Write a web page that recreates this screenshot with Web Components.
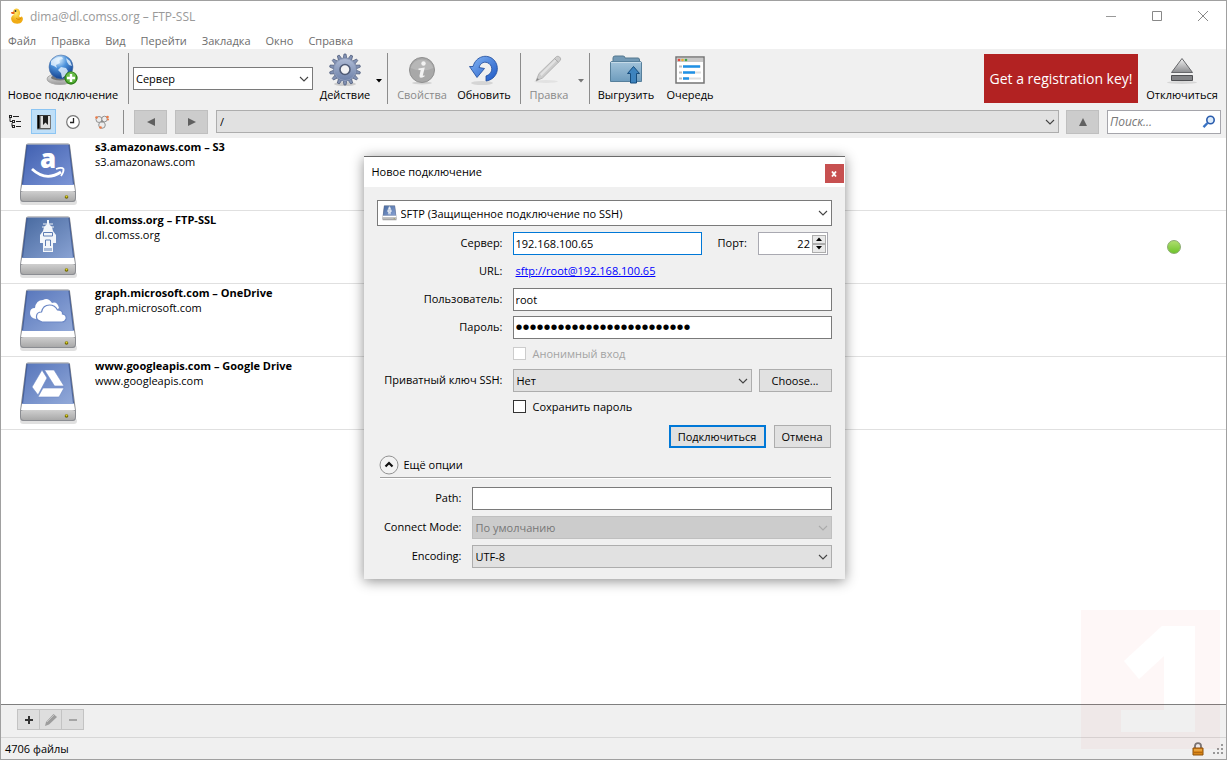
<!DOCTYPE html>
<html lang="ru">
<head>
<meta charset="utf-8">
<meta name="viewport" content="width=device-width, initial-scale=1">
<title>dima@dl.comss.org – FTP-SSL</title>
<style>
  html, body { margin: 0; height: 100%; }
  body { font: 11px/15px "Open Sans", "Noto Sans", sans-serif; color: #000; background: #fff; overflow: hidden; }
</style>
</head>
<body>
<ftp-window></ftp-window>

<script>
const define = (name, html, init) => customElements.define(name, class extends HTMLElement {
  constructor() {
    super();
    const t = document.createElement('template');
    t.innerHTML = html;
    this.attachShadow({ mode: 'open' }).append(t.content.cloneNode(true));
  }
  connectedCallback() { if (init) init.call(this, this.shadowRoot); }
});

/* ---------- icons ---------- */
const ICONS = {
  duck: [16, 16, `<defs><radialGradient id="g" cx=".4" cy=".3"><stop offset="0" stop-color="#ffec6a"/><stop offset="1" stop-color="#f0ab14"/></radialGradient></defs>
    <path d="M4.500 7C2 8 1.500 11 3 13.500C5 16.500 11.500 16.500 13 13.500C14.500 11.500 14 9 12.500 8.500C11.500 9.500 10.500 9.300 10 8C11.500 6.500 11.500 3 9.500 1.200C7.500-.2 4.600.8 4.200 3.200C4 4.800 5 6 4.500 7Z" fill="url(#g)"/>
    <path d="M5.500 3.500L2 4.200C1.700 5.700 3.500 6.300 5.500 5.800Z" fill="#e8621c"/><circle cx="6.500" cy="3" r=".9" fill="#333"/><path d="M7 10C9 12 11 11.500 12 10" fill="none" stroke="#cf8208"/>`],
  globe: [34, 34, `<defs><radialGradient id="g" cx=".4" cy=".2" r=".85"><stop offset="0" stop-color="#e2f4ff"/><stop offset=".4" stop-color="#4d93dc"/><stop offset="1" stop-color="#0c3785"/></radialGradient>
    <linearGradient id="s" x1="0" y1="0" x2="0" y2="1"><stop offset="0" stop-color="#eee"/><stop offset="1" stop-color="#999"/></linearGradient></defs>
    <ellipse cx="14" cy="26" rx="13" ry="5.500" fill="url(#s)" stroke="#a8a8a8"/><ellipse cx="14" cy="24.500" rx="9" ry="3" fill="#777"/>
    <circle cx="15" cy="14" r="12" fill="url(#g)" stroke="#5275a8" stroke-width=".6"/>
    <path d="M5 8C8 5 12 3.500 16 4L17 6L13 7L14 10L10 12L11 15L8 13L5 12ZM15 14L20 15L22 18L19 23L16 25L15 20L12 17ZM20 5L24 8L26 13L23 12L21 9Z" fill="#e8f5ff" opacity=".8"/>
    <circle cx="25" cy="25" r="6.500" fill="#4ca82d"/><circle cx="25" cy="25" r="6" fill="none" stroke="#2a7418"/><circle cx="25" cy="24" r="5" fill="#7cc95c" opacity=".6"/>
    <path d="M25 21V29M21 25H29" stroke="#fff" stroke-width="2.400"/>`],
  gear: [34, 34, `<defs><linearGradient id="g" x1="0" y1="0" x2="0" y2="1"><stop offset="0" stop-color="#b0bcd6"/><stop offset="1" stop-color="#6c80a8"/></linearGradient></defs>
    <ellipse cx="17" cy="31" rx="11" ry="2" fill="#ccc"/><g id="teeth" fill="#8292b4" stroke="#4f5c7b" stroke-width=".7"></g>
    <circle cx="17" cy="16.500" r="11.500" fill="url(#g)" stroke="#5b6988" stroke-width=".6"/><circle cx="17" cy="16.500" r="11" fill="none" stroke="#8f9dbd"/><circle cx="17" cy="16.500" r="5" fill="#f2f2f3" stroke="#4f5b76" stroke-width="1.600"/>`],
  info: [30, 30, `<ellipse cx="15" cy="28" rx="10" ry="1.500" fill="#d2d2d2"/><circle cx="15" cy="15" r="12.500" fill="#a8a8a8" stroke="#8f8f8f"/><path d="M3.500 13A12 12 0 0 1 26.500 13Q15 18 3.500 13Z" fill="#bdbdbd" opacity=".7"/><circle cx="16.500" cy="8.500" r="2.200" fill="#f2f2f2"/><path d="M11.500 13.500L17.800 12.500L15.800 20.500Q16 21 17.500 20.200V21.500Q12 24.500 12.500 20.500L13.700 15H11.500Z" fill="#f2f2f2"/>`],
  refresh: [32, 32, `<defs><linearGradient id="g" x1="0" y1="0" x2="1" y2="1"><stop offset="0" stop-color="#86b7f5"/><stop offset="1" stop-color="#1d57c4"/></linearGradient></defs>
    <ellipse cx="14" cy="29" rx="11" ry="2" fill="#d5d5d5"/><path d="M5 12.500C8 2 19-.5 25.500 5.500C33 13 29 25.500 18 27V22C24.500 20 25.500 13 21 9.500C17 6.800 12.500 8.500 11 13.500L16.500 14.500L9 23.500L1.500 12.500Z" fill="url(#g)" stroke="#1b4799" stroke-width=".8"/>`],
  pencil: [32, 32, `<ellipse cx="13" cy="27.500" rx="12" ry="1.500" fill="#e2e2e2"/><path d="M3 27L6 19.500L23.500 2.500Q25 1.500 26.800 3.200Q28.500 5 27.200 6.500L9.500 24Z" fill="#cdcdcd" stroke="#aaa" stroke-width=".8"/><path d="M7 20L22.500 5L24 6.300L8.500 22Z" fill="#e2e2e2"/><path d="M3 27L4.500 24L6 25.500Z" fill="#888"/><path d="M21.500 4.500L25.500 8.300" stroke="#aaa"/>`],
  folder: [34, 30, `<defs><linearGradient id="g" x1="0" y1="0" x2="0" y2="1"><stop offset="0" stop-color="#a2c3da"/><stop offset="1" stop-color="#6e9cbd"/></linearGradient></defs>
    <path d="M4 8V3Q4 1 6 1H14Q16 1 16 3H29Q30.500 3 30.500 5V9Z" fill="#7299b5" stroke="#54788f"/><path d="M1.500 8Q1.500 6.500 3 6.500H31Q32.500 6.500 32.500 8V26.500H1.500Z" fill="url(#g)" stroke="#57809c"/><path d="M2 7.500H32" stroke="#c4dae8"/>
    <path d="M24.500 11.500L30.500 18.500H27.500V28H21.500V18.500H18.500Z" fill="#3d83be" stroke="#174d7d"/>`],
  queue: [30, 28, `<path d="M1 1H29V27H1Z" fill="#fff" stroke="#747474" stroke-width="1.500"/><path d="M2 2H28V6H2Z" fill="#c8c8c8"/><circle cx="4" cy="4" r="1.300" fill="#e5483c"/><circle cx="7.500" cy="4" r="1.300" fill="#ecad32"/><circle cx="11" cy="4" r="1.300" fill="#3fa545"/>
    <path d="M4 10.500H7M4 16.500H7M4 22.500H7" stroke="#bbb" stroke-width="2"/><path d="M8 10.500H26M8 16.500H26M8 22.500H26" stroke="#dfdfdf" stroke-width="2"/><path d="M8 10.500H25M8 16.500H20M8 22.500H14" stroke="#2091e6" stroke-width="2.500"/>`],
  eject: [32, 28, `<defs><linearGradient id="g" x1="0" y1="0" x2="0" y2="1"><stop offset="0" stop-color="#f2f2f2"/><stop offset="1" stop-color="#8b8c8f"/></linearGradient></defs><ellipse cx="16" cy="26.500" rx="15" ry="1.500" fill="#d6d6d6"/><path d="M16 2.500L26.500 16.500H5.500Z" fill="url(#g)" stroke="#66676a"/><path d="M5.500 19.500H26.500V24.500H5.500Z" fill="#828386" stroke="#4e4f52"/>`],
  tree: [16, 16, `<path d="M2 2.500H5M5 7.500H8M5 12.500H8" stroke="#222" stroke-width="3"/><path d="M3 4V7.500H5M5 9V12.500M6 2.500H12M9 7.500H14M9 12.500H14" stroke="#222" fill="none"/><path d="M3 2.500H4M6 7.500H7M6 12.500H7" stroke="#efefef"/>`],
  bookmark: [16, 16, `<path d="M1 1H14.500V15H1Z" fill="#3a3a3a"/><path d="M4.500 2H14V14H4.500Z" fill="#dedede"/><path d="M2.500 1V15" stroke="#000"/><path d="M7 2H12V11L9.500 8.500L7 11Z" fill="#1f1f1f"/><path d="M1 15H14.500M14.500 1V15" stroke="#777"/>`],
  clock: [16, 16, `<circle cx="8" cy="8" r="6.300" fill="#fff" stroke="#777" stroke-width="1.200"/><path d="M8.500 4V8.500H5" stroke="#222" stroke-width="1.300" fill="none"/>`],
  bonjour: [16, 16, `<g fill="#ececec" stroke="#888" stroke-width=".9"><circle cx="5" cy="5.500" r="3"/><circle cx="10.500" cy="5" r="2.800"/><circle cx="8" cy="11" r="3.300"/></g><g fill="#ec7a45"><circle cx="2.500" cy="3.500" r="1.300"/><circle cx="13.500" cy="3" r="1.300"/><circle cx="14" cy="5.500" r="1"/><circle cx="6.500" cy="13.500" r="1.300"/></g><circle cx="8" cy="7.500" r="1" fill="#888"/>`],
  search: [14, 14, `<circle cx="8.500" cy="5" r="3.700" fill="#dcebfa" stroke="#2a5cad" stroke-width="1.600"/><path d="M5.500 8L1.500 12.200" stroke="#3973c4" stroke-width="2.400"/>`],
  lock: [12, 14, `<path d="M3 7V4Q3 1.200 6 1.200Q9 1.200 9 4V7" fill="none" stroke="#777" stroke-width="1.800"/><path d="M1 6H11V13H1Z" fill="#d98618" stroke="#8d520b"/><path d="M2 8H10" stroke="#f4bd62"/><path d="M2 10.500H10" stroke="#b4690f"/>`],
  grip: [12, 12, `<path d="M9 1h2v2H9zM9 5h2v2H9zM9 9h2v2H9zM5 5h2v2H5zM5 9h2v2H5zM1 9h2v2H1z" fill="#999"/>`],
  down: [12, 8, `<path d="M2 2L6 6L10 2" fill="none" stroke="currentColor" stroke-width="1.100"/>`],
  drop: [6, 4, `<path d="M0 0H6L3 3.500Z" fill="currentColor"/>`],
  left: [10, 10, `<path d="M9 1V9L1 5Z" fill="#606060"/>`],
  right: [10, 10, `<path d="M1 1V9L9 5Z" fill="#606060"/>`],
  up: [10, 10, `<path d="M1 9H9L5 1Z" fill="#606060"/>`],
  min: [12, 12, `<path d="M1 6.500H11" stroke="#999"/>`],
  max: [12, 12, `<path d="M1.500 1.500H10.500V10.500H1.500Z" fill="none" stroke="#888"/>`],
  close: [12, 12, `<path d="M1 1L11 11M11 1L1 11" stroke="#888"/>`],
  x: [6, 6, `<path d="M1 .500L5 5.500M5 .500L1 5.500" stroke="#fff" stroke-width="1.800"/>`],
  plus: [10, 10, `<path d="M5 1V9M1 5H9" stroke="#333" stroke-width="2"/>`],
  minus: [10, 10, `<path d="M1 5H9" stroke="#a5a5a5" stroke-width="2"/>`],
  edit: [14, 14, `<path d="M1 13L2 9L9.500 1L13 4L5 11.500Z" fill="#9d9d9d"/><path d="M3 9L10 2" stroke="#c4c4c4"/>`],
  expand: [20, 20, `<circle cx="10" cy="10" r="9" fill="#f3f3f3" stroke="#929292"/><path d="M6.500 11.500L10 8L13.500 11.500" stroke="#111" stroke-width="2.200" fill="none"/>`],
};
customElements.define('ui-icon', class extends HTMLElement {
  constructor() { super(); this.attachShadow({ mode: 'open' }); }
  static get observedAttributes() { return ['name']; }
  attributeChangedCallback() {
    const [w, h, art] = ICONS[this.getAttribute('name')];
    this.shadowRoot.innerHTML = `<style>:host{display:inline-block;flex:none;width:${w}px;height:${h}px}svg{display:block}</style>
      <svg width="${w}" height="${h}" viewBox="0 0 ${w} ${h}" aria-hidden="true">${art}</svg>`;
    const teeth = this.shadowRoot.querySelector('#teeth');
    if (teeth) teeth.innerHTML = Array.from({ length: 14 }, (_, i) =>
      `<path d="M15 6L16 1H18L19 6Z" transform="rotate(${i * 360 / 14} 17 16.500)"/>`).join('');
  }
});

/* Disk drive with a service emblem on its lid */
const EMBLEMS = {
  s3: ['#3f5fb0', '#7d96d6', `<text x="30" y="26" text-anchor="middle" font-family="Open Sans, sans-serif" font-weight="800" font-size="26" fill="#fff">a</text><path d="M14 27Q28 40 43 30" fill="none" stroke="#fff" stroke-width="2.800"/><path d="M38 27Q44 25 45.500 27Q46 30 43 34" fill="none" stroke="#fff" stroke-width="1.800"/>`],
  ftp: ['#47699f', '#8aa3d4', `<path d="M29 5H31V9L34 12L35 16L38 20V28H35V37H25V28H22V20L25 16L26 12L29 9Z" fill="#f3f6fa"/><path d="M25 9H35M24 12H36" stroke="#f3f6fa" stroke-width="1"/><path d="M25.500 17.500H34.500V21H25.500ZM27.500 31V25H32.500V31M27 33V36M29 33V36M31 33V36M33 33V36" fill="none" stroke="#5f7eb4" stroke-width="1"/>`],
  onedrive: ['#5675bb', '#93aad9', `<path d="M18 31Q12 30 12 25Q12 20 17 20Q18 12 25 12Q30 9 34 15Q39 13 41 20L27 32Z" fill="#fff"/><path d="M22 33Q18 32 18.500 28Q19 24 23.500 24Q25 17 31.500 17Q37 17 39.500 22Q45 22 44.500 26Q49 27 48 31Q47 34 44 34H24Z" fill="#fff" stroke="#6c88c6" stroke-width="1.200"/>`],
  gdrive: ['#5675bb', '#93aad9', `<path d="M24 9L29 17L20 34L14 26ZM26.500 9H36L46 25H36.500ZM25 27H46L41 36H20Z" fill="#fff" stroke="#6c88c6" stroke-width=".6"/>`],
};
customElements.define('drive-icon', class extends HTMLElement {
  constructor() { super(); this.attachShadow({ mode: 'open' }); }
  connectedCallback() {
    const [a, b, art] = EMBLEMS[this.getAttribute('kind')];
    this.shadowRoot.innerHTML = `<style>:host{display:block;flex:none;width:60px;height:64px}svg{display:block;width:100%;height:100%;overflow:visible}</style>
      <svg viewBox="0 0 60 64" aria-hidden="true"><defs>
      <linearGradient id="lid" x1="0" y1="0" x2="1" y2="1"><stop offset="0" stop-color="${a}"/><stop offset="1" stop-color="${b}"/></linearGradient>
      <linearGradient id="base" x1="0" y1="0" x2="0" y2="1"><stop offset="0" stop-color="#cfcfcf"/><stop offset="1" stop-color="#a9a9a9"/></linearGradient></defs>
      <rect x="2" y="57" width="57" height="6" rx="3" fill="#000" opacity=".12"/>
      <path d="M8 3Q8 1.500 10 1.500H50Q52 1.500 52 3L58 50V56Q58 60 55 60H5Q2 60 2 56V50Z" fill="#8b8d92"/>
      <path d="M9 2.500H51L56 43H4Z" fill="url(#lid)"/><path d="M9 2.500H51" stroke="#8f9cb8"/><path d="M9 3L4.500 42M51 3L55.500 42" stroke="#35508e" stroke-width="1.200" opacity=".7"/>
      <path d="M4 43H56L57 49H3Z" fill="#fff"/><path d="M3 50Q4 49 6 49H54Q56 49 57 50V56Q57 59 54 59H6Q3 59 3 56Z" fill="url(#base)"/>
      <circle cx="48.500" cy="55" r="1.800" fill="#6d6500"/><circle cx="48.500" cy="54.500" r="1" fill="#e0d52c"/>${art}</svg>`;
  }
});

/* Drop-down frame: the real <select> is slotted in, the chevron lies over it */
define('combo-box', `<style>
  :host { display: grid; position: relative; min-width: 0; color: #444; }
  ::slotted(select) { appearance: none; width: 100%; height: 23px; margin: 0; padding: 0 20px 0 3px; border: 1px solid #adadad; border-radius: 0;
    background: #e1e1e1; color: #000; font: inherit; box-sizing: border-box; outline: 0; }
  :host([kind=field]) ::slotted(select) { background: #fff; border-color: #7a7a7a; padding-left: 2px; }
  :host([kind=protocol]) ::slotted(select) { background: #fff; border-color: #7a7a7a; height: 26px; padding-left: 23px; }
  :host([kind=off]) { color: #aaa; }
  :host([kind=off]) ::slotted(select) { background: #ccc; border-color: #bfbfbf; color: #777; opacity: 1; }
  ui-icon { position: absolute; right: 3px; top: 50%; margin-top: -4px; pointer-events: none; }
  .pic { position: absolute; left: 5px; top: 5px; pointer-events: none; }
</style><slot></slot><span class="pic"><slot name="picture"></slot></span><ui-icon name="down"></ui-icon>`);

define('title-bar', `<style>
  :host { display: flex; align-items: center; height: 30px; padding-left: 8px; color: #999; font-size: 12px; }
  span { margin-left: 5px; flex: 1; }
  button { width: 46px; height: 30px; padding: 0; border: 0; background: none; display: grid; place-items: center; }
</style><ui-icon name="duck"></ui-icon><span><slot></slot></span>
<button aria-label="Свернуть"><ui-icon name="min"></ui-icon></button><button aria-label="Развернуть"><ui-icon name="max"></ui-icon></button><button aria-label="Закрыть"><ui-icon name="close"></ui-icon></button>`);

define('menu-strip', `<style>
  :host { display: block; }
  nav { display: flex; gap: 15px; padding: 0 7px; height: 18px; align-items: center; }
  button { border: 0; padding: 0; background: none; color: #6d6d6d; font: inherit; }
</style><nav><button>Файл</button><button>Правка</button><button>Вид</button><button>Перейти</button><button>Закладка</button><button>Окно</button><button>Справка</button></nav>`);

define('tool-button', `<style>
  :host { display: block; flex: none; }
  button { display: grid; grid-template-rows: 34px 15px; justify-items: center; align-items: center; width: 100%; padding: 0; border: 0; background: none; color: inherit; font: inherit; white-space: nowrap; justify-content: center; }
  :host([off]) { color: #8a8a8a; }
</style><button><ui-icon></ui-icon><span><slot></slot></span></button>`, function (root) {
  root.querySelector('ui-icon').setAttribute('name', this.getAttribute('icon'));
  root.querySelector('button').disabled = this.hasAttribute('off');
});

define('main-toolbar', `<style>
  :host { display: flex; align-items: flex-start; height: 54px; padding: 4px 7px 0 5px; background: #f0f0f0; }
  i { width: 1px; height: 51px; margin: 0 8px; background: #8c8c8c; flex: none; }
  i.tight { margin-right: 4px; }
  i.flush { margin-left: 0; }
  combo-box { width: 180px; margin: 14px 6px 0 0; flex: none; }
  .w114 { width: 114px; } .w52 { width: 52px; } .w40 { width: 40px; } .w56 { width: 56px; } .w74 { width: 74px; }
  .next { margin-left: 8px; }
  .arrow { width: 16px; height: 51px; border: 0; padding: 0; background: none; }
  .arrow.wide { width: 20px; padding-left: 4px; color: #777; }
  .key { margin: 1px 7px 0 auto; width: 154px; height: 49px; padding: 0; border: 0; background: #b22222; color: #fff; font: 14px/20px "Open Sans", "Noto Sans", sans-serif; white-space: nowrap; flex: none; }
</style>
<tool-button class="w114" icon="globe">Новое подключение</tool-button><i class="tight"></i>
<combo-box kind="field"><select aria-label="Быстрое подключение"><option>Сервер</option></select></combo-box>
<tool-button class="w52" icon="gear">Действие</tool-button><button class="arrow" aria-label="Меню действий"><ui-icon name="drop"></ui-icon></button><i class="flush"></i>
<tool-button class="w52" icon="info" off>Свойства</tool-button><tool-button class="w56 next" icon="refresh">Обновить</tool-button><i></i>
<tool-button class="w40" icon="pencil" off>Правка</tool-button><button class="arrow wide" aria-label="Меню правки"><ui-icon name="drop"></ui-icon></button><i class="flush"></i>
<tool-button class="w56" icon="folder">Выгрузить</tool-button><tool-button class="w56 next" icon="queue">Очередь</tool-button>
<button class="key">Get a registration key!</button>
<tool-button class="w74" icon="eject">Отключиться</tool-button>`);

define('location-bar', `<style>
  :host { display: flex; align-items: center; box-sizing: border-box; height: 31px; padding: 0 5px 2px 1px; background: #f0f0f0; }
  button { display: grid; place-items: center; box-sizing: border-box; padding: 0; flex: none; }
  .view { width: 25px; height: 25px; border: 1px solid transparent; background: none; margin-right: 4px; }
  .view[aria-pressed=true] { background: #bfdff8; border-color: #8cc5f3; }
  i { width: 1px; height: 24px; margin: 0 10px 0 5px; background: #8c8c8c; flex: none; }
  .go { width: 33px; height: 24px; border: 1px solid #bfbfbf; background: #ccc; margin-right: 8px; }
  combo-box { flex: 1; }
  .go.up { margin-left: 7px; }
  label { display: flex; align-items: center; box-sizing: border-box; width: 114px; height: 24px; padding: 0 4px 0 2px; border: 1px solid #a5a5ab; background: #fff; flex: none; }
  input { flex: 1; min-width: 0; padding: 0; border: 0; outline: 0; font: inherit; font-style: italic; background: none; }
  input::placeholder { color: #777; font-size: 12px; }
</style>
<button class="view" aria-label="Дерево"><ui-icon name="tree"></ui-icon></button><button class="view" aria-label="Закладки" aria-pressed="true"><ui-icon name="bookmark"></ui-icon></button><button class="view" aria-label="История"><ui-icon name="clock"></ui-icon></button><button class="view" aria-label="Bonjour"><ui-icon name="bonjour"></ui-icon></button><i></i>
<button class="go" aria-label="Назад"><ui-icon name="left"></ui-icon></button><button class="go" aria-label="Вперёд"><ui-icon name="right"></ui-icon></button>
<combo-box><select aria-label="Путь"><option>/</option></select></combo-box>
<button class="go up" aria-label="Вверх"><ui-icon name="up"></ui-icon></button>
<label><input type="search" placeholder="Поиск..." aria-label="Поиск"><ui-icon name="search"></ui-icon></label>`);

define('bookmark-row', `<style>
  :host { display: flex; height: 72px; padding: 0 45px 0 17px; border-bottom: 1px solid #e0e0e0; }
  .pic { width: 60px; margin-top: 4px; }
  .text { flex: 1; margin: 1px 0 0 17px; }
  b, span { display: block; }
  .dot { display: none; align-self: center; width: 14px; height: 14px; box-sizing: border-box; border: 1px solid #8bab70; border-radius: 50%; background: linear-gradient(#aede6e, #6fc42c); }
  :host([online]) .dot { display: block; }
</style><div class="pic"><slot name="icon"></slot></div><div class="text"><b><slot name="name"></slot></b><span><slot></slot></span></div><div class="dot"></div>`);

define('bookmark-list', `<style>
  :host { display: block; flex: 1; min-height: 0; overflow: hidden; background: #fff; }
</style>
<bookmark-row><drive-icon slot="icon" kind="s3"></drive-icon><span slot="name">s3.amazonaws.com – S3</span>s3.amazonaws.com</bookmark-row>
<bookmark-row online><drive-icon slot="icon" kind="ftp"></drive-icon><span slot="name">dl.comss.org – FTP-SSL</span>dl.comss.org</bookmark-row>
<bookmark-row><drive-icon slot="icon" kind="onedrive"></drive-icon><span slot="name">graph.microsoft.com – OneDrive</span>graph.microsoft.com</bookmark-row>
<bookmark-row><drive-icon slot="icon" kind="gdrive"></drive-icon><span slot="name">www.googleapis.com – Google Drive</span>www.googleapis.com</bookmark-row>`);

define('bookmark-actions', `<style>
  :host { display: flex; height: 33px; padding: 4px 16px 0; box-sizing: border-box; border-top: 1px solid #7f7f7f; background: #f0f0f0; }
  button { display: grid; place-items: center; width: 23px; height: 21px; padding: 0; border: 1px solid #c3c3c3; background: #dedede; margin-right: -1px; box-sizing: border-box; }
  button:first-child { border-color: #8c8c8c; background: #fdfdfd; position: relative; }
</style><button aria-label="Добавить"><ui-icon name="plus"></ui-icon></button><button aria-label="Изменить" disabled><ui-icon name="edit"></ui-icon></button><button aria-label="Удалить" disabled><ui-icon name="minus"></ui-icon></button>`);

define('status-bar', `<style>
  :host { display: flex; align-items: center; height: 22px; padding: 0 2px 0 4px; border-top: 1px solid #d7d7d7; background: #f0f0f0; box-sizing: border-box; }
  span { flex: 1; }
  .lock { margin-right: 8px; }
</style><span><slot></slot></span><ui-icon class="lock" name="lock"></ui-icon><ui-icon name="grip"></ui-icon>`);

define('site-watermark', `<style>
  :host { display: block; position: absolute; right: 6px; bottom: 10px; width: 139px; height: 139px; pointer-events: none; }
  svg { display: block; }
</style><svg width="139" height="139" viewBox="0 0 139 139" aria-hidden="true"><path fill="#d80000" fill-opacity=".03" fill-rule="evenodd" d="M0 0H139V139H0ZM81 16H114V122H40V100H83V46L58 69L43 51Z"/></svg>`);

define('connect-dialog', `<style>
  :host { display: block; width: 481px; box-sizing: border-box; border-top: 1px solid #6a6a6a; background: #f0f0f0; box-shadow: 0 2px 12px rgba(0,0,0,.45); }
  header { display: flex; align-items: center; height: 30px; padding: 0 1px 0 8px; background: #fff; box-sizing: border-box; }
  h1 { flex: 1; margin: 0; padding-bottom: 1px; font: inherit; }
  .close { width: 19px; height: 19px; padding: 0; border: 0; background: #c75050; display: grid; place-items: center; margin-top: 3px; }
  form { padding: 13px 13px 11px; }
  .main, .more { display: grid; column-gap: 10px; align-items: center; }
  .main { grid-template-columns: 126px minmax(0, 1fr); row-gap: 5px; margin-top: 6px; }
  .more { grid-template-columns: 85px minmax(0, 1fr); row-gap: 6px; margin-top: 8px; }
  .cap { justify-self: end; white-space: nowrap; padding-bottom: 2px; }
  input:not([type=checkbox]) { box-sizing: border-box; width: 100%; height: 23px; padding: 0 2px 1px; border: 1px solid #7a7a7a; border-radius: 0; background: #fff; color: #000; font: inherit; outline: 0; margin: 0; }
  input#host { border-color: #0078d7; width: 189px; }
  .line { display: flex; align-items: center; height: 23px; }
  .line .cap { margin: 0 11px 0 16px; }
  .port { display: flex; width: 70px; height: 23px; border: 1px solid #a9a9b1; background: #fff; box-sizing: border-box; padding: 1px; align-items: center; }
  .port input:not([type=checkbox]) { flex: 1; min-width: 0; border: 0; height: 19px; text-align: right; appearance: textfield; }
  input::-webkit-inner-spin-button { display: none; }
  .spin { display: grid; }
  .spin button { width: 14px; height: 9px; padding: 0; border: 1px solid #adadad; background: #e9e9e9; display: grid; place-items: center; box-sizing: border-box; }
  .spin button:first-child ui-icon { transform: rotate(180deg); }
  a { color: #00f; margin-left: 3px; padding-bottom: 2px; }
  .check { display: flex; align-items: center; gap: 7px; height: 18px; margin-bottom: 2px; grid-column: 2; }
  .check input { appearance: none; width: 13px; height: 13px; margin: 0; border: 1px solid #333; background: #fff; box-sizing: border-box; }
  .off { color: #a3a3a3; }
  .check.off input { border-color: #ccc; }
  .line combo-box { width: 239px; margin-right: 7px; }
  .btn { height: 23px; padding: 0; border: 1px solid #adadad; background: #e1e1e1; color: #000; font: inherit; box-sizing: border-box; white-space: nowrap; }
  .choose { width: 73px; }
  .actions { display: flex; justify-content: flex-end; gap: 8px; margin: 8px 1px 0 0; }
  .go { width: 97px; border: 2px solid #0078d7; }
  .cancel { width: 57px; }
  .fold { display: flex; align-items: center; gap: 5px; width: 100%; height: 29px; margin-top: 2px; padding: 0 0 0 2px; border: 0; background: none; font: inherit; color: #000; text-align: left; box-sizing: border-box; }
  hr { margin: -2px 1px 0 3px; border: 0; border-top: 1px solid #a0a0a0; border-bottom: 1px solid #fff; }
  drive-icon { width: 15px; height: 16px; }
  input.pw:not([type=checkbox]) { font-family: "Liberation Sans", sans-serif; font-size: 20px; }
</style>
<header><h1>Новое подключение</h1><button class="close" aria-label="Закрыть"><ui-icon name="x"></ui-icon></button></header>
<form>
  <combo-box kind="protocol"><drive-icon slot="picture" kind="ftp"></drive-icon><select aria-label="Протокол"><option>SFTP (Защищенное подключение по SSH)</option></select></combo-box>
  <div class="main">
    <label class="cap" for="host">Сервер:</label>
    <div class="line"><input id="host" value="192.168.100.65"><label class="cap" for="port">Порт:</label>
      <div class="port"><input id="port" type="number" value="22"><div class="spin"><button type="button" aria-label="Больше"><ui-icon name="drop"></ui-icon></button><button type="button" aria-label="Меньше"><ui-icon name="drop"></ui-icon></button></div></div></div>
    <span class="cap">URL:</span><div class="line"><a href="sftp://root@192.168.100.65">sftp://root@192.168.100.65</a></div>
    <label class="cap" for="user">Пользователь:</label><input id="user" value="root">
    <label class="cap" for="pass">Пароль:</label><input id="pass" class="pw" type="password" value="aaaaaaaaaaaaaaaaaaaaaaaaa">
    <label class="check off"><input type="checkbox" disabled>Анонимный вход</label>
    <label class="cap" for="key">Приватный ключ SSH:</label>
    <div class="line"><combo-box><select id="key"><option>Нет</option></select></combo-box><button type="button" class="btn choose">Choose...</button></div>
    <label class="check"><input type="checkbox">Сохранить пароль</label>
  </div>
  <div class="actions"><button type="button" class="btn go">Подключиться</button><button type="button" class="btn cancel">Отмена</button></div>
  <button type="button" class="fold" aria-expanded="true"><ui-icon name="expand"></ui-icon>Ещё опции</button><hr>
  <div class="more">
    <label class="cap" for="path">Path:</label><input id="path">
    <label class="cap" for="mode">Connect Mode:</label><combo-box kind="off"><select id="mode" disabled><option>По умолчанию</option></select></combo-box>
    <label class="cap" for="enc">Encoding:</label><combo-box><select id="enc"><option>UTF-8</option></select></combo-box>
  </div>
</form>`);

define('ftp-window', `<style>
  :host { display: flex; flex-direction: column; height: 100vh; box-sizing: border-box; border: 1px solid #a0a0a0; position: relative; background: #fff; }
  connect-dialog { position: absolute; left: calc(50% - 250px); top: 155px; }
</style>
<title-bar>dima@dl.comss.org – FTP-SSL</title-bar>
<menu-strip></menu-strip>
<main-toolbar></main-toolbar>
<location-bar></location-bar>
<bookmark-list></bookmark-list>
<bookmark-actions></bookmark-actions>
<status-bar>4706 файлы</status-bar>
<site-watermark></site-watermark>
<connect-dialog></connect-dialog>`);
</script>
</body>
</html>
